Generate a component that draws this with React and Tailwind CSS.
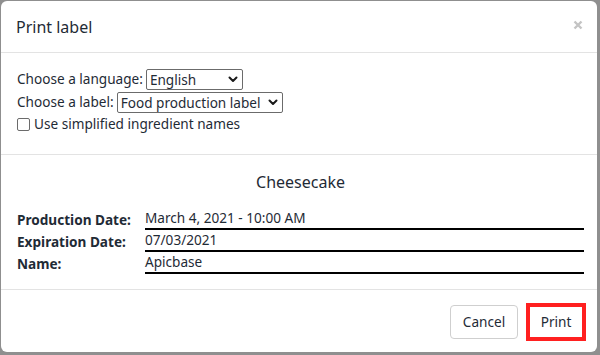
// Print label modal
import React from 'react';

function FakeSelect({ value, width }) {
  return (
    <div className={`flex items-center justify-between h-[21px] border border-[#6b6b6b] rounded-[2px] bg-white pl-[3px] pr-[4px] whitespace-nowrap ${width}`}>
      <span className="leading-none">{value}</span>
      <svg width="10" height="7" viewBox="0 0 10 7" className="ml-[3px] shrink-0">
        <path d="M1.5 1.5 L5 5 L8.5 1.5" fill="none" stroke="#1a1a1a" strokeWidth="2" strokeLinecap="round" strokeLinejoin="round" />
      </svg>
    </div>
  );
}

function Row({ label, value }) {
  return (
    <div className="grid grid-cols-[128px_1fr] h-[22px] items-end">
      <span className="font-bold leading-[20px] whitespace-nowrap">{label}</span>
      <span className="border-b-2 border-black leading-[20px]">{value}</span>
    </div>
  );
}

export default function App() {
  return (
    <div className="w-[600px] h-[355px] bg-[#8f8f8f] pt-px pl-px pr-[3px] pb-[3px] overflow-hidden" style={{ fontFamily: '"Noto Sans", sans-serif' }}>
      <div className="h-[351px] bg-white rounded-[6px] flex flex-col text-[#1f2b36] text-[13.6px]">
        {/* header */}
        <div className="h-[52px] border-b border-[#e3e3e3] flex items-center justify-between pl-[15px] pr-[14px]">
          <h2 className="text-[16px] leading-none">Print label</h2>
          <svg width="10" height="10" viewBox="0 0 10 10" className="mb-[4px]">
            <path d="M1.5 1.5 L8.5 8.5 M8.5 1.5 L1.5 8.5" stroke="#c4c4c4" strokeWidth="2.4" />
          </svg>
        </div>

        {/* options */}
        <div className="h-[102px] border-b border-[#e3e3e3] pl-[16px] pt-[16px] flex flex-col">
          <div className="flex items-center gap-[3px] whitespace-nowrap">
            <span>Choose a language:</span>
            <FakeSelect value="English" width="w-[97px]" />
          </div>
          <div className="flex items-center gap-[3px] mt-[2px] whitespace-nowrap">
            <span>Choose a label:</span>
            <FakeSelect value="Food production label" width="w-[166px]" />
          </div>
          <label className="flex items-center gap-[4px] mt-[1px] whitespace-nowrap">
            <span className="w-[13px] h-[13px] border border-[#6b6b6b] rounded-[2px] bg-white" />
            <span>Use simplified ingredient names</span>
          </label>
        </div>

        {/* label preview */}
        <div className="h-[135px] border-b border-[#e3e3e3] pl-[16px] pr-[13px] pt-[16px]">
          <div className="text-center text-[16px] leading-[22px] mb-[15px]">Cheesecake</div>
          <Row label="Production Date:" value="March 4, 2021 - 10:00 AM" />
          <Row label="Expiration Date:" value="07/03/2021" />
          <Row label="Name:" value="Apicbase" />
        </div>

        {/* footer */}
        <div className="flex-1 flex items-center justify-end gap-[8px] pr-[11px] pt-[2px]">
          <button className="h-[34px] w-[68px] border border-[#cfcfcf] rounded-[4px] bg-white">Cancel</button>
          <button className="h-[38px] w-[60px] border-4 border-[#ff2020] bg-white">Print</button>
        </div>
      </div>
    </div>
  );
}
